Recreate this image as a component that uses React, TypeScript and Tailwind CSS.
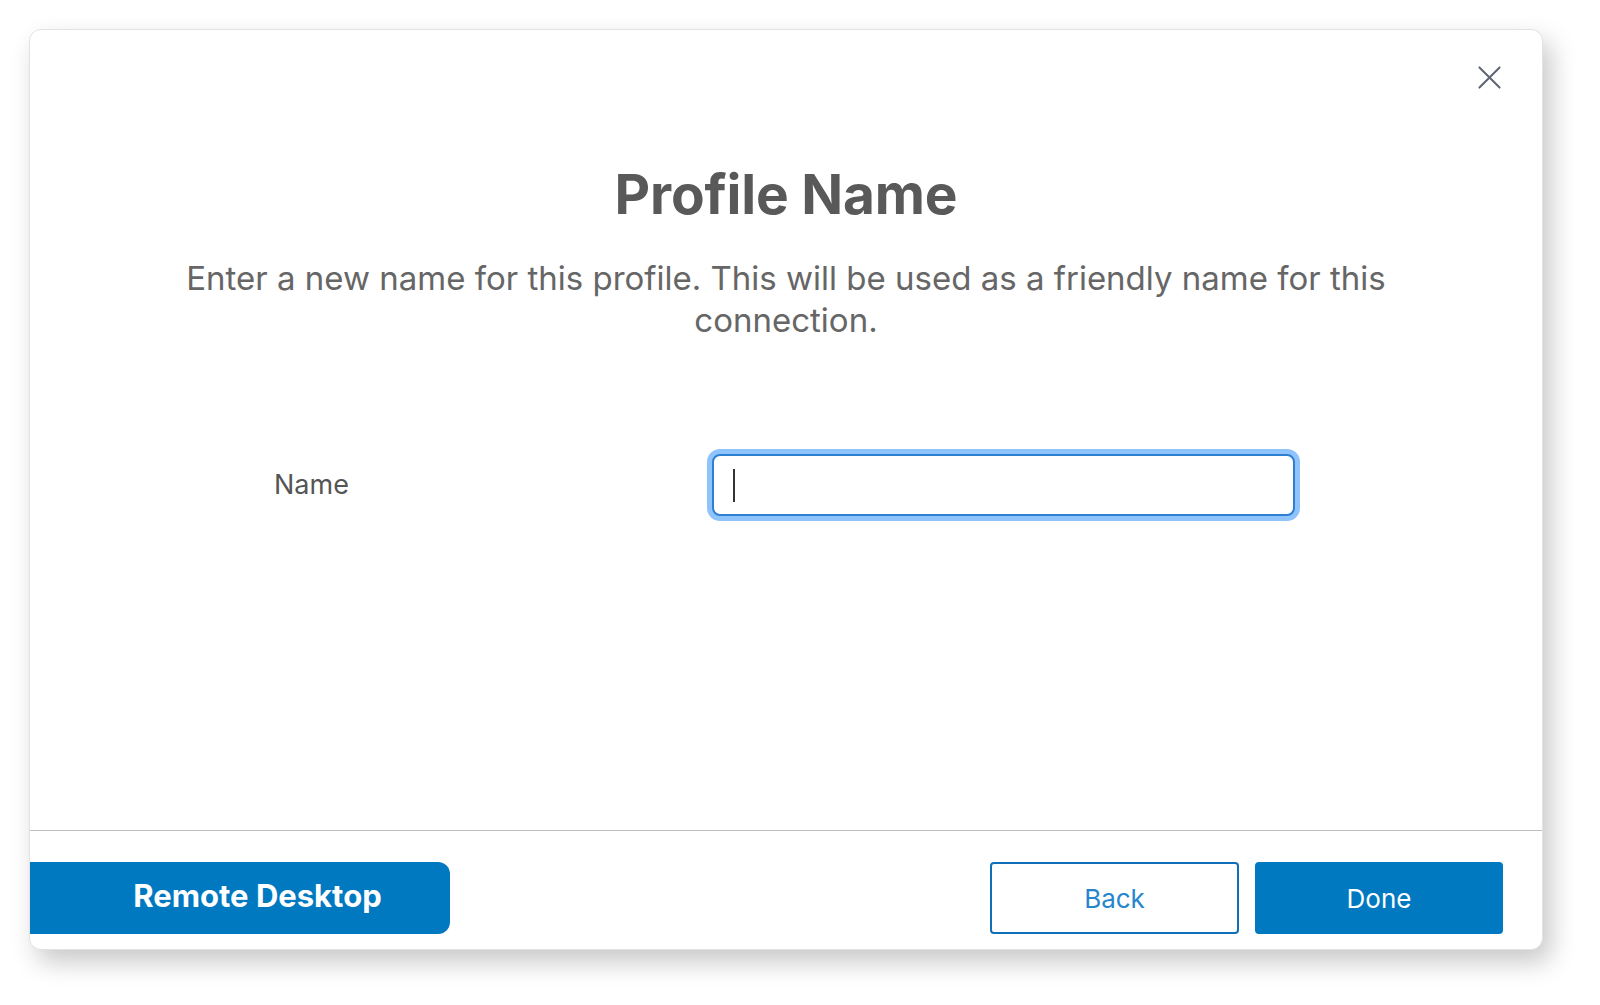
/**
 * Profile name step of the connection wizard.
 */
export default function App() {
  return (
    <div className="min-h-screen w-full bg-white pl-[29px] pt-[29px] font-['Inter',_'Noto_Sans',_sans-serif]">
      <div className="relative flex h-[921px] w-[1514px] flex-col overflow-hidden rounded-[12px] border border-[#e3e3e3] bg-white shadow-[8px_12px_26px_rgba(0,0,0,0.22)]">
        {/* Close button */}
        <button
          type="button"
          className="absolute right-[41px] top-[36px] text-[#5f6570]"
          aria-label="Close"
        >
          <svg className="h-[23px] w-[23px]" viewBox="0 0 24 24" fill="none" stroke="currentColor" strokeWidth={2.1} strokeLinecap="round">
            <path d="M1.5 1.5l21 21M22.5 1.5l-21 21" />
          </svg>
        </button>

        {/* Body */}
        <div className="flex flex-1 flex-col items-center pt-[133px]">
          <h1 className="text-[55px] font-bold leading-[62px] tracking-[-0.2px] text-[#595959]">
            Profile Name
          </h1>
          <p className="mt-[32px] max-w-[1260px] text-center text-[33px] leading-[42px] text-[#666666]">
            Enter a new name for this profile. This will be used as a friendly name for this
            connection.
          </p>

          <div className="mt-[113px] flex w-full items-center">
            <label
              htmlFor="profile-name"
              className="w-[682px] shrink-0 pl-[244px] text-[27px] text-[#555555]"
            >
              Name
            </label>
            <div className="flex h-[62px] w-[583px] items-center rounded-[8px] border-2 border-[#2f7fd0] bg-white pl-[19px] ring-[5px] ring-[#8ec3fb]">
              <span className="h-[33px] w-[2px] bg-[#333333]" />
              <input
                id="profile-name"
                type="text"
                className="h-full flex-1 bg-transparent text-[27px] caret-transparent outline-none"
              />
            </div>
          </div>
        </div>

        {/* Footer */}
        <div className="flex items-start border-t border-[#bdbdbd] pb-[15px] pt-[31px] pr-[39px]">
          <button
            type="button"
            className="h-[72px] w-[420px] rounded-r-[12px] bg-[#0079c1] pb-[4px] pl-[35px] text-[31px] font-bold text-white"
          >
            Remote Desktop
          </button>
          <div className="ml-auto flex gap-[16px]">
            <button
              type="button"
              className="h-[72px] w-[249px] rounded-[4px] border-2 border-[#0f70b7] bg-white text-[26px] text-[#2486cc]"
            >
              Back
            </button>
            <button
              type="button"
              className="h-[72px] w-[248px] rounded-[4px] bg-[#0079c1] text-[26px] text-white"
            >
              Done
            </button>
          </div>
        </div>
      </div>
    </div>
  );
}
